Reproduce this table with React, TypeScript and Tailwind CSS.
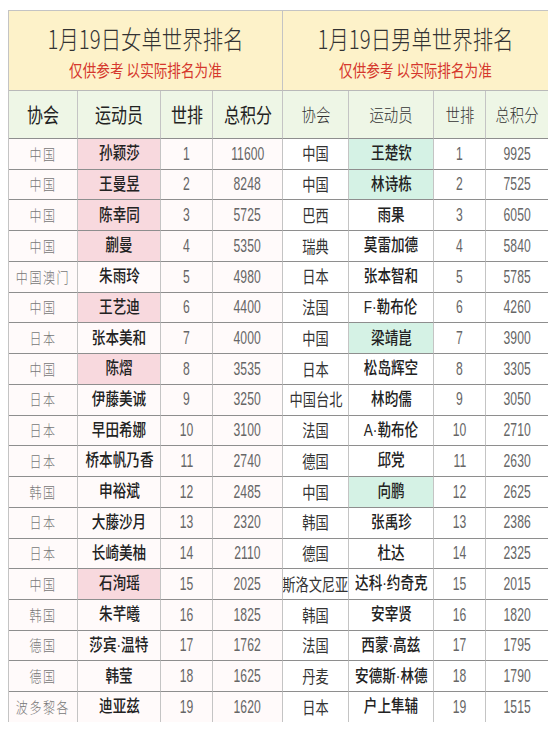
import React from "react";

type Row = [string, string, string, boolean];

const women: Row[] = [
  ["中国", "孙颖莎", "11600", true],
  ["中国", "王曼昱", "8248", true],
  ["中国", "陈幸同", "5725", true],
  ["中国", "蒯曼", "5350", true],
  ["中国澳门", "朱雨玲", "4980", false],
  ["中国", "王艺迪", "4400", true],
  ["日本", "张本美和", "4000", false],
  ["中国", "陈熠", "3535", true],
  ["日本", "伊藤美诚", "3250", false],
  ["日本", "早田希娜", "3100", false],
  ["日本", "桥本帆乃香", "2740", false],
  ["韩国", "申裕斌", "2485", false],
  ["日本", "大藤沙月", "2320", false],
  ["日本", "长崎美柚", "2110", false],
  ["中国", "石洵瑶", "2025", true],
  ["韩国", "朱芊曦", "1825", false],
  ["德国", "莎宾·温特", "1762", false],
  ["德国", "韩莹", "1625", false],
  ["波多黎各", "迪亚兹", "1620", false],
];

const men: Row[] = [
  ["中国", "王楚钦", "9925", true],
  ["中国", "林诗栋", "7525", true],
  ["巴西", "雨果", "6050", false],
  ["瑞典", "莫雷加德", "5840", false],
  ["日本", "张本智和", "5785", false],
  ["法国", "F·勒布伦", "4260", false],
  ["中国", "梁靖崑", "3900", true],
  ["日本", "松岛辉空", "3305", false],
  ["中国台北", "林昀儒", "3050", false],
  ["法国", "A·勒布伦", "2710", false],
  ["德国", "邱党", "2630", false],
  ["中国", "向鹏", "2625", true],
  ["韩国", "张禹珍", "2386", false],
  ["德国", "杜达", "2325", false],
  ["斯洛文尼亚", "达科·约奇克", "2015", false],
  ["韩国", "安宰贤", "1820", false],
  ["法国", "西蒙·高兹", "1795", false],
  ["丹麦", "安德斯·林德", "1790", false],
  ["日本", "户上隼辅", "1515", false],
];

const cell =
  "flex items-center justify-center overflow-hidden border-r border-b border-r-[#c4c4c4] border-b-[#8e8e8e]";
const num =
  "inline-block scale-x-[0.64] whitespace-nowrap font-['Liberation_Sans',sans-serif] text-[19px] text-[#666]";

function Half({
  title,
  rows,
  women,
}: {
  title: string;
  rows: Row[];
  women: boolean;
}) {
  const cols = women
    ? "grid-cols-[69px_83px_52px_70px]"
    : "grid-cols-[66px_85px_52px_63px]";
  const headText = women
    ? "inline-block scale-x-80 whitespace-nowrap text-[20px] text-[#222]"
    : "inline-block scale-x-80 whitespace-nowrap text-[18px] text-[#333] font-light";
  return (
    <div className={women ? "w-[274px] shrink-0" : "w-[266px] shrink-0"}>
      <div className="h-[80px] flex flex-col items-center bg-[#fdf2c9] border-r border-b border-r-[#c4c4c4] border-b-[#b9b9b9]">
        <span className="mt-[8px] inline-block scale-x-80 whitespace-nowrap text-[25.5px] font-light leading-[38px] text-[#333]">
          {title}
        </span>
        <span className="mt-[1px] inline-block scale-x-80 whitespace-nowrap text-[17px] leading-[24px] text-[#d5372c]">
          仅供参考 以实际排名为准
        </span>
      </div>
      <div className={`grid ${cols} h-[48px] bg-[#eef6e6]`}>
        {["协会", "运动员", "世排", "总积分"].map((h) => (
          <div key={h} className={cell}>
            <span className={headText}>{h}</span>
          </div>
        ))}
      </div>
      {rows.map(([country, name, pts, hl], i) => (
        <div
          key={name}
          className={`grid ${cols} h-[30.74px] ${women ? "bg-[#fffafa]" : "bg-white"}`}
        >
          <div className={cell}>
            {women ? (
              <span className="inline-block scale-x-80 whitespace-nowrap text-[15px] font-light tracking-[2px] text-[#777]">
                {country}
              </span>
            ) : (
              <span className="inline-block scale-x-80 whitespace-nowrap text-[16.5px] text-[#333]">
                {country}
              </span>
            )}
          </div>
          <div
            className={`${cell} ${
              hl ? (women ? "bg-[#f8d9de]" : "bg-[#d5f2e5]") : ""
            }`}
          >
            <span className="inline-block scale-x-80 whitespace-nowrap font-['Liberation_Sans','Noto_Sans_CJK_SC',sans-serif] text-[17px] font-medium text-[#222]">
              {name}
            </span>
          </div>
          <div className={cell}>
            <span className={num}>{i + 1}</span>
          </div>
          <div className={cell}>
            <span className={num}>{pts}</span>
          </div>
        </div>
      ))}
    </div>
  );
}

export default function App() {
  return (
    <div className="w-[554px] h-[733px] bg-white pt-[10px] pl-[8px] font-['Noto_Sans_CJK_SC',sans-serif]">
      <div className="flex w-[540px] h-[712px] overflow-hidden border-l border-t border-[#c4c4c4]">
        <Half title="1月19日女单世界排名" rows={women} women />
        <Half title="1月19日男单世界排名" rows={men} women={false} />
      </div>
    </div>
  );
}
